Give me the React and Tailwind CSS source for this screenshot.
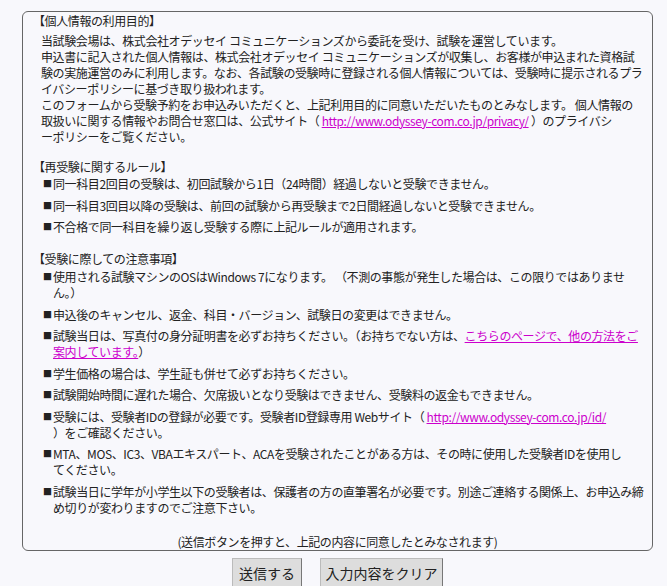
import React from "react";

const Item = ({ children, className = "" }) => (
  <div className={"flex mb-[5.5px] " + className}>
    <span className="w-[10px] shrink-0 text-[9px] leading-[16px]">■</span>
    <div>{children}</div>
  </div>
);

const A = ({ children }) => (
  <a href="#" className="text-[#cc00cc] underline">
    {children}
  </a>
);

export default function App() {
  return (
    <div
      className="min-h-[586px] bg-[#f8f8fc] pt-[11px] pl-[22px] text-[12px] leading-[16px] text-[#222] tracking-[-0.4px]"
      style={{ fontFamily: '"Noto Sans CJK JP", "Noto Sans", sans-serif' }}
    >
      <div className="w-[631px] border border-[#666] rounded-[6px] pt-[1px] pb-0 whitespace-nowrap">
        <div className="pl-[10px]">【個人情報の利用目的】</div>
        <div className="pl-[18px] mt-[4px]">
          当試験会場は、株式会社オデッセイ コミュニケーションズから委託を受け、試験を運営しています。
          <br />
          申込書に記入された個人情報は、株式会社オデッセイ コミュニケーションズが収集し、お客様が申込まれた資格試
          <br />
          験の実施運営のみに利用します。なお、各試験の受験時に登録される個人情報については、受験時に提示されるプラ
          <br />
          イバシーポリシーに基づき取り扱われます。
          <br />
          このフォームから受験予約をお申込みいただくと、上記利用目的に同意いただいたものとみなします。 個人情報の
          <br />
          取扱いに関する情報やお問合せ窓口は、公式サイト（ <A>http://www.odyssey-com.co.jp/privacy/</A> ）のプライバシ
          <br />
          ーポリシーをご覧ください。
        </div>

        <div className="pl-[10px] mt-[14px]">【再受験に関するルール】</div>
        <div className="pl-[20px] mt-[1px]">
          <Item>同一科目2回目の受験は、初回試験から1日（24時間）経過しないと受験できません。</Item>
          <Item>同一科目3回目以降の受験は、前回の試験から再受験まで2日間経過しないと受験できません。</Item>
          <Item>不合格で同一科目を繰り返し受験する際に上記ルールが適用されます。</Item>
        </div>

        <div className="pl-[10px] mt-[16px]">【受験に際しての注意事項】</div>
        <div className="pl-[20px] mt-[2px]">
          <Item>
            使用される試験マシンのOSはWindows 7になります。 （不測の事態が発生した場合は、この限りではありませ
            <br />
            ん。）
          </Item>
          <Item>申込後のキャンセル、返金、科目・バージョン、試験日の変更はできません。</Item>
          <Item>
            試験当日は、写真付の身分証明書を必ずお持ちください。（お持ちでない方は、<A>こちらのページで、他の方法をご</A>
            <br />
            <A>案内しています。</A>）
          </Item>
          <Item>学生価格の場合は、学生証も併せて必ずお持ちください。</Item>
          <Item>試験開始時間に遅れた場合、欠席扱いとなり受験はできません、受験料の返金もできません。</Item>
          <Item>
            受験には、受験者IDの登録が必要です。受験者ID登録専用 Webサイト（ <A>http://www.odyssey-com.co.jp/id/</A>
            <br />
            ）をご確認ください。
          </Item>
          <Item>
            MTA、MOS、IC3、VBAエキスパート、ACAを受験されたことがある方は、その時に使用した受験者IDを使用し
            <br />
            てください。
          </Item>
          <Item>
            試験当日に学年が小学生以下の受験者は、保護者の方の直筆署名が必要です。別途ご連絡する関係上、お申込み締
            <br />
            め切りが変わりますのでご注意下さい。
          </Item>
        </div>

        <div className="text-center mt-[18px]">(送信ボタンを押すと、上記の内容に同意したとみなされます)</div>
      </div>

      <div className="w-[631px] flex justify-center gap-[18px] mt-[7px] tracking-normal">
        <button className="h-[30px] w-[70px] bg-[#dddddd] border border-[#bbb] border-r-[#777] border-b-[#777] text-[14px] text-[#222]">
          送信する
        </button>
        <button className="h-[30px] w-[123px] bg-[#dddddd] border border-[#bbb] border-r-[#777] border-b-[#777] text-[14px] text-[#222]">
          入力内容をクリア
        </button>
      </div>
    </div>
  );
}
